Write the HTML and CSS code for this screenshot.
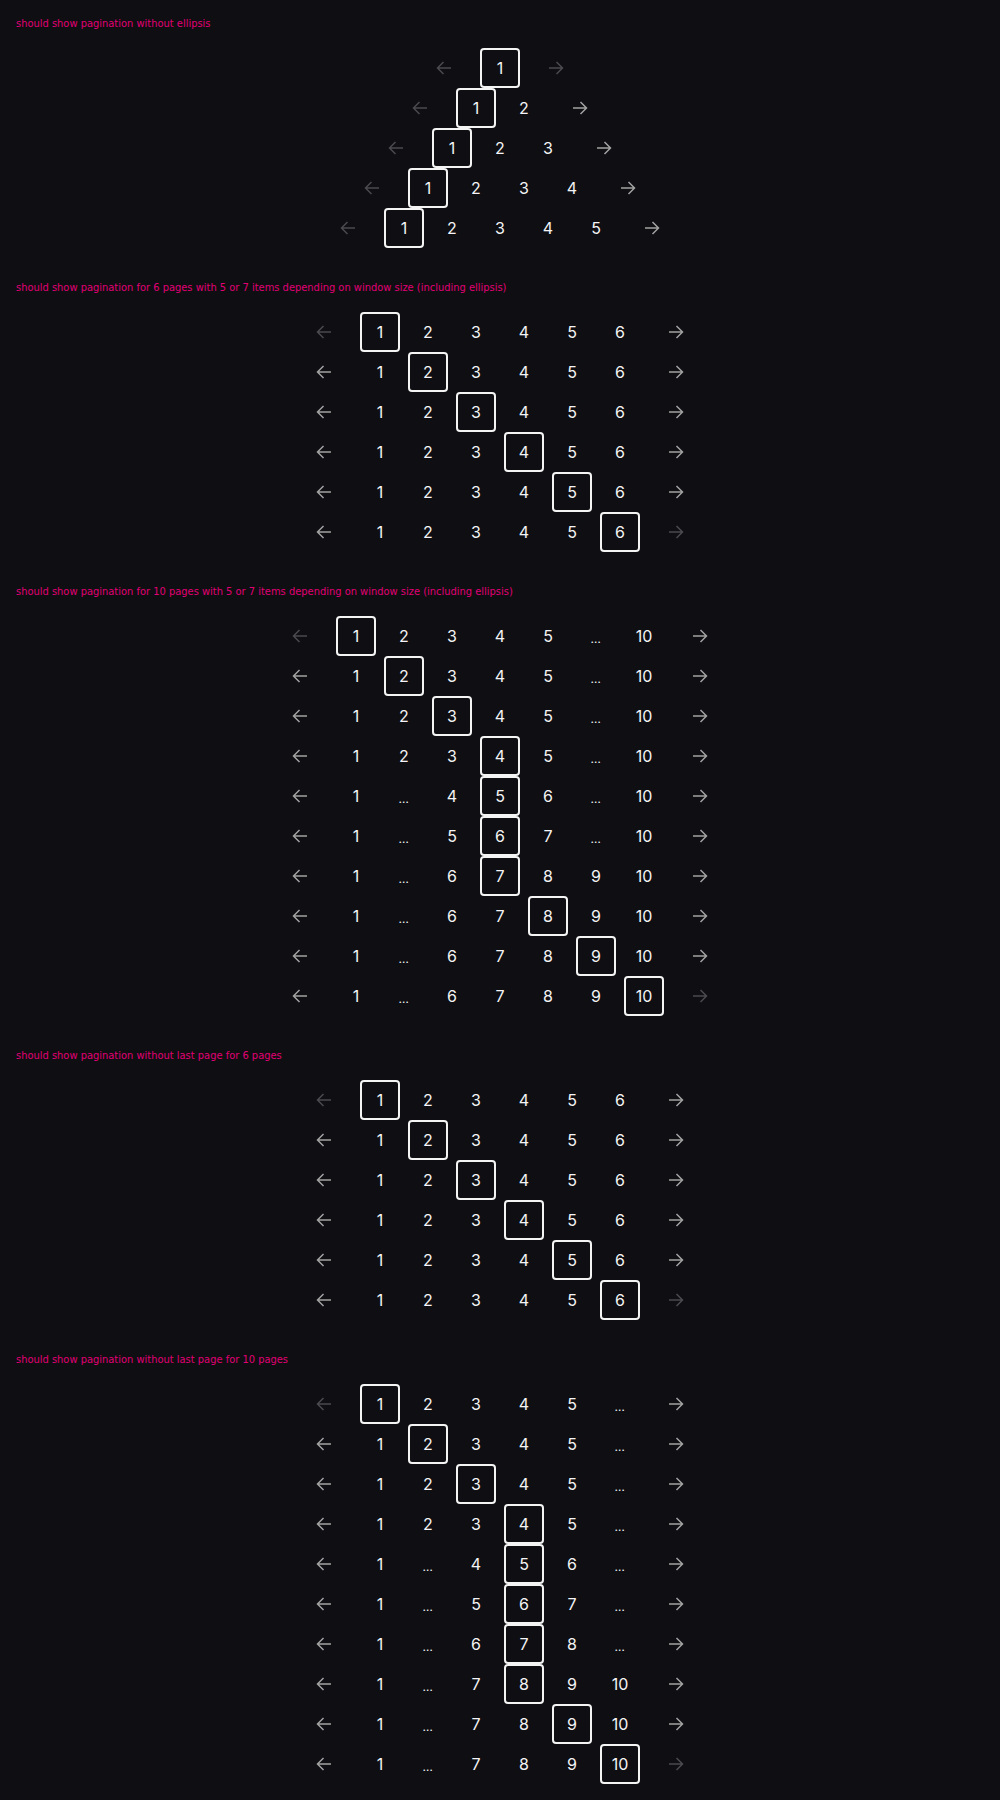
FILE: index.html
```html
<!DOCTYPE html>
<html lang="en">
<head>
<meta charset="utf-8">
<title>Pagination</title>
<link rel="stylesheet" href="styles.css">
</head>
<body>
<svg class="sprite" xmlns="http://www.w3.org/2000/svg">
  <symbol id="al" viewBox="0 0 16 16"><path d="M15 8H1.5M7.5 2L1.5 8l6 6" fill="none" stroke="currentColor" stroke-width="1.5"/></symbol>
  <symbol id="ar" viewBox="0 0 16 16"><path d="M1 8h13.5M8.5 2l6 6-6 6" fill="none" stroke="currentColor" stroke-width="1.5"/></symbol>
</svg>

<section class="story">
  <h2 class="title">should show pagination without ellipsis</h2>
  <div class="rows">
    <nav class="pagination"><span class="arrow off"><svg><use href="#al"/></svg></span><div class="pages"><span class="page cur">1</span></div><span class="arrow off"><svg><use href="#ar"/></svg></span></nav>
    <nav class="pagination"><span class="arrow off"><svg><use href="#al"/></svg></span><div class="pages"><span class="page cur">1</span><span class="page">2</span></div><span class="arrow"><svg><use href="#ar"/></svg></span></nav>
    <nav class="pagination"><span class="arrow off"><svg><use href="#al"/></svg></span><div class="pages"><span class="page cur">1</span><span class="page">2</span><span class="page">3</span></div><span class="arrow"><svg><use href="#ar"/></svg></span></nav>
    <nav class="pagination"><span class="arrow off"><svg><use href="#al"/></svg></span><div class="pages"><span class="page cur">1</span><span class="page">2</span><span class="page">3</span><span class="page">4</span></div><span class="arrow"><svg><use href="#ar"/></svg></span></nav>
    <nav class="pagination"><span class="arrow off"><svg><use href="#al"/></svg></span><div class="pages"><span class="page cur">1</span><span class="page">2</span><span class="page">3</span><span class="page">4</span><span class="page">5</span></div><span class="arrow"><svg><use href="#ar"/></svg></span></nav>
  </div>
</section>

<section class="story">
  <h2 class="title">should show pagination for 6 pages with 5 or 7 items depending on window size (including ellipsis)</h2>
  <div class="rows">
    <nav class="pagination"><span class="arrow off"><svg><use href="#al"/></svg></span><div class="pages"><span class="page cur">1</span><span class="page">2</span><span class="page">3</span><span class="page">4</span><span class="page">5</span><span class="page">6</span></div><span class="arrow"><svg><use href="#ar"/></svg></span></nav>
    <nav class="pagination"><span class="arrow"><svg><use href="#al"/></svg></span><div class="pages"><span class="page">1</span><span class="page cur">2</span><span class="page">3</span><span class="page">4</span><span class="page">5</span><span class="page">6</span></div><span class="arrow"><svg><use href="#ar"/></svg></span></nav>
    <nav class="pagination"><span class="arrow"><svg><use href="#al"/></svg></span><div class="pages"><span class="page">1</span><span class="page">2</span><span class="page cur">3</span><span class="page">4</span><span class="page">5</span><span class="page">6</span></div><span class="arrow"><svg><use href="#ar"/></svg></span></nav>
    <nav class="pagination"><span class="arrow"><svg><use href="#al"/></svg></span><div class="pages"><span class="page">1</span><span class="page">2</span><span class="page">3</span><span class="page cur">4</span><span class="page">5</span><span class="page">6</span></div><span class="arrow"><svg><use href="#ar"/></svg></span></nav>
    <nav class="pagination"><span class="arrow"><svg><use href="#al"/></svg></span><div class="pages"><span class="page">1</span><span class="page">2</span><span class="page">3</span><span class="page">4</span><span class="page cur">5</span><span class="page">6</span></div><span class="arrow"><svg><use href="#ar"/></svg></span></nav>
    <nav class="pagination"><span class="arrow"><svg><use href="#al"/></svg></span><div class="pages"><span class="page">1</span><span class="page">2</span><span class="page">3</span><span class="page">4</span><span class="page">5</span><span class="page cur">6</span></div><span class="arrow off"><svg><use href="#ar"/></svg></span></nav>
  </div>
</section>

<section class="story">
  <h2 class="title">should show pagination for 10 pages with 5 or 7 items depending on window size (including ellipsis)</h2>
  <div class="rows">
    <nav class="pagination"><span class="arrow off"><svg><use href="#al"/></svg></span><div class="pages"><span class="page cur">1</span><span class="page">2</span><span class="page">3</span><span class="page">4</span><span class="page">5</span><span class="page dots">…</span><span class="page">10</span></div><span class="arrow"><svg><use href="#ar"/></svg></span></nav>
    <nav class="pagination"><span class="arrow"><svg><use href="#al"/></svg></span><div class="pages"><span class="page">1</span><span class="page cur">2</span><span class="page">3</span><span class="page">4</span><span class="page">5</span><span class="page dots">…</span><span class="page">10</span></div><span class="arrow"><svg><use href="#ar"/></svg></span></nav>
    <nav class="pagination"><span class="arrow"><svg><use href="#al"/></svg></span><div class="pages"><span class="page">1</span><span class="page">2</span><span class="page cur">3</span><span class="page">4</span><span class="page">5</span><span class="page dots">…</span><span class="page">10</span></div><span class="arrow"><svg><use href="#ar"/></svg></span></nav>
    <nav class="pagination"><span class="arrow"><svg><use href="#al"/></svg></span><div class="pages"><span class="page">1</span><span class="page">2</span><span class="page">3</span><span class="page cur">4</span><span class="page">5</span><span class="page dots">…</span><span class="page">10</span></div><span class="arrow"><svg><use href="#ar"/></svg></span></nav>
    <nav class="pagination"><span class="arrow"><svg><use href="#al"/></svg></span><div class="pages"><span class="page">1</span><span class="page dots">…</span><span class="page">4</span><span class="page cur">5</span><span class="page">6</span><span class="page dots">…</span><span class="page">10</span></div><span class="arrow"><svg><use href="#ar"/></svg></span></nav>
    <nav class="pagination"><span class="arrow"><svg><use href="#al"/></svg></span><div class="pages"><span class="page">1</span><span class="page dots">…</span><span class="page">5</span><span class="page cur">6</span><span class="page">7</span><span class="page dots">…</span><span class="page">10</span></div><span class="arrow"><svg><use href="#ar"/></svg></span></nav>
    <nav class="pagination"><span class="arrow"><svg><use href="#al"/></svg></span><div class="pages"><span class="page">1</span><span class="page dots">…</span><span class="page">6</span><span class="page cur">7</span><span class="page">8</span><span class="page">9</span><span class="page">10</span></div><span class="arrow"><svg><use href="#ar"/></svg></span></nav>
    <nav class="pagination"><span class="arrow"><svg><use href="#al"/></svg></span><div class="pages"><span class="page">1</span><span class="page dots">…</span><span class="page">6</span><span class="page">7</span><span class="page cur">8</span><span class="page">9</span><span class="page">10</span></div><span class="arrow"><svg><use href="#ar"/></svg></span></nav>
    <nav class="pagination"><span class="arrow"><svg><use href="#al"/></svg></span><div class="pages"><span class="page">1</span><span class="page dots">…</span><span class="page">6</span><span class="page">7</span><span class="page">8</span><span class="page cur">9</span><span class="page">10</span></div><span class="arrow"><svg><use href="#ar"/></svg></span></nav>
    <nav class="pagination"><span class="arrow"><svg><use href="#al"/></svg></span><div class="pages"><span class="page">1</span><span class="page dots">…</span><span class="page">6</span><span class="page">7</span><span class="page">8</span><span class="page">9</span><span class="page cur">10</span></div><span class="arrow off"><svg><use href="#ar"/></svg></span></nav>
  </div>
</section>

<section class="story">
  <h2 class="title">should show pagination without last page for 6 pages</h2>
  <div class="rows">
    <nav class="pagination"><span class="arrow off"><svg><use href="#al"/></svg></span><div class="pages"><span class="page cur">1</span><span class="page">2</span><span class="page">3</span><span class="page">4</span><span class="page">5</span><span class="page">6</span></div><span class="arrow"><svg><use href="#ar"/></svg></span></nav>
    <nav class="pagination"><span class="arrow"><svg><use href="#al"/></svg></span><div class="pages"><span class="page">1</span><span class="page cur">2</span><span class="page">3</span><span class="page">4</span><span class="page">5</span><span class="page">6</span></div><span class="arrow"><svg><use href="#ar"/></svg></span></nav>
    <nav class="pagination"><span class="arrow"><svg><use href="#al"/></svg></span><div class="pages"><span class="page">1</span><span class="page">2</span><span class="page cur">3</span><span class="page">4</span><span class="page">5</span><span class="page">6</span></div><span class="arrow"><svg><use href="#ar"/></svg></span></nav>
    <nav class="pagination"><span class="arrow"><svg><use href="#al"/></svg></span><div class="pages"><span class="page">1</span><span class="page">2</span><span class="page">3</span><span class="page cur">4</span><span class="page">5</span><span class="page">6</span></div><span class="arrow"><svg><use href="#ar"/></svg></span></nav>
    <nav class="pagination"><span class="arrow"><svg><use href="#al"/></svg></span><div class="pages"><span class="page">1</span><span class="page">2</span><span class="page">3</span><span class="page">4</span><span class="page cur">5</span><span class="page">6</span></div><span class="arrow"><svg><use href="#ar"/></svg></span></nav>
    <nav class="pagination"><span class="arrow"><svg><use href="#al"/></svg></span><div class="pages"><span class="page">1</span><span class="page">2</span><span class="page">3</span><span class="page">4</span><span class="page">5</span><span class="page cur">6</span></div><span class="arrow off"><svg><use href="#ar"/></svg></span></nav>
  </div>
</section>

<section class="story">
  <h2 class="title">should show pagination without last page for 10 pages</h2>
  <div class="rows">
    <nav class="pagination"><span class="arrow off"><svg><use href="#al"/></svg></span><div class="pages"><span class="page cur">1</span><span class="page">2</span><span class="page">3</span><span class="page">4</span><span class="page">5</span><span class="page dots">…</span></div><span class="arrow"><svg><use href="#ar"/></svg></span></nav>
    <nav class="pagination"><span class="arrow"><svg><use href="#al"/></svg></span><div class="pages"><span class="page">1</span><span class="page cur">2</span><span class="page">3</span><span class="page">4</span><span class="page">5</span><span class="page dots">…</span></div><span class="arrow"><svg><use href="#ar"/></svg></span></nav>
    <nav class="pagination"><span class="arrow"><svg><use href="#al"/></svg></span><div class="pages"><span class="page">1</span><span class="page">2</span><span class="page cur">3</span><span class="page">4</span><span class="page">5</span><span class="page dots">…</span></div><span class="arrow"><svg><use href="#ar"/></svg></span></nav>
    <nav class="pagination"><span class="arrow"><svg><use href="#al"/></svg></span><div class="pages"><span class="page">1</span><span class="page">2</span><span class="page">3</span><span class="page cur">4</span><span class="page">5</span><span class="page dots">…</span></div><span class="arrow"><svg><use href="#ar"/></svg></span></nav>
    <nav class="pagination"><span class="arrow"><svg><use href="#al"/></svg></span><div class="pages"><span class="page">1</span><span class="page dots">…</span><span class="page">4</span><span class="page cur">5</span><span class="page">6</span><span class="page dots">…</span></div><span class="arrow"><svg><use href="#ar"/></svg></span></nav>
    <nav class="pagination"><span class="arrow"><svg><use href="#al"/></svg></span><div class="pages"><span class="page">1</span><span class="page dots">…</span><span class="page">5</span><span class="page cur">6</span><span class="page">7</span><span class="page dots">…</span></div><span class="arrow"><svg><use href="#ar"/></svg></span></nav>
    <nav class="pagination"><span class="arrow"><svg><use href="#al"/></svg></span><div class="pages"><span class="page">1</span><span class="page dots">…</span><span class="page">6</span><span class="page cur">7</span><span class="page">8</span><span class="page dots">…</span></div><span class="arrow"><svg><use href="#ar"/></svg></span></nav>
    <nav class="pagination"><span class="arrow"><svg><use href="#al"/></svg></span><div class="pages"><span class="page">1</span><span class="page dots">…</span><span class="page">7</span><span class="page cur">8</span><span class="page">9</span><span class="page">10</span></div><span class="arrow"><svg><use href="#ar"/></svg></span></nav>
    <nav class="pagination"><span class="arrow"><svg><use href="#al"/></svg></span><div class="pages"><span class="page">1</span><span class="page dots">…</span><span class="page">7</span><span class="page">8</span><span class="page cur">9</span><span class="page">10</span></div><span class="arrow"><svg><use href="#ar"/></svg></span></nav>
    <nav class="pagination"><span class="arrow"><svg><use href="#al"/></svg></span><div class="pages"><span class="page">1</span><span class="page dots">…</span><span class="page">7</span><span class="page">8</span><span class="page">9</span><span class="page cur">10</span></div><span class="arrow off"><svg><use href="#ar"/></svg></span></nav>
  </div>
</section>
</body>
</html>
```

FILE: styles.css
```css
html {
  background: #0e0e13;
}

body {
  margin: 0;
  padding: 16px 16px 0;
  background: #0e0e13;
  font-family: Inter, "Noto Sans", "DejaVu Sans", sans-serif;
}

.sprite {
  display: none;
}

.story + .story {
  margin-top: 32px;
}

.title {
  margin: 0 0 16px;
  font-family: "DejaVu Sans Condensed", "Liberation Sans", sans-serif;
  font-weight: 400;
  font-size: 11px;
  line-height: 16px;
  color: #e20074;
}

.rows {
  display: flex;
  flex-direction: column;
  align-items: center;
  margin-left: -16px;
  margin-right: -16px;
}

.pagination {
  display: flex;
  align-items: center;
  gap: 16px;
  height: 40px;
}

.pages {
  display: flex;
  gap: 8px;
}

.page {
  box-sizing: border-box;
  width: 40px;
  height: 40px;
  display: flex;
  align-items: center;
  justify-content: center;
  color: #f4f4f4;
  font-size: 16px;
  line-height: 1;
}

.page.cur {
  border: 2px solid #f4f4f4;
  border-radius: 4px;
}

.page.dots {
  font-size: 12px;
  padding-top: 6px;
  letter-spacing: 0.5px;
}

.arrow {
  width: 40px;
  height: 40px;
  display: flex;
  align-items: center;
  justify-content: center;
  color: #a2a2a2;
}

.arrow.off {
  color: #4b4b4f;
}

.arrow svg {
  width: 16px;
  height: 16px;
}
```
